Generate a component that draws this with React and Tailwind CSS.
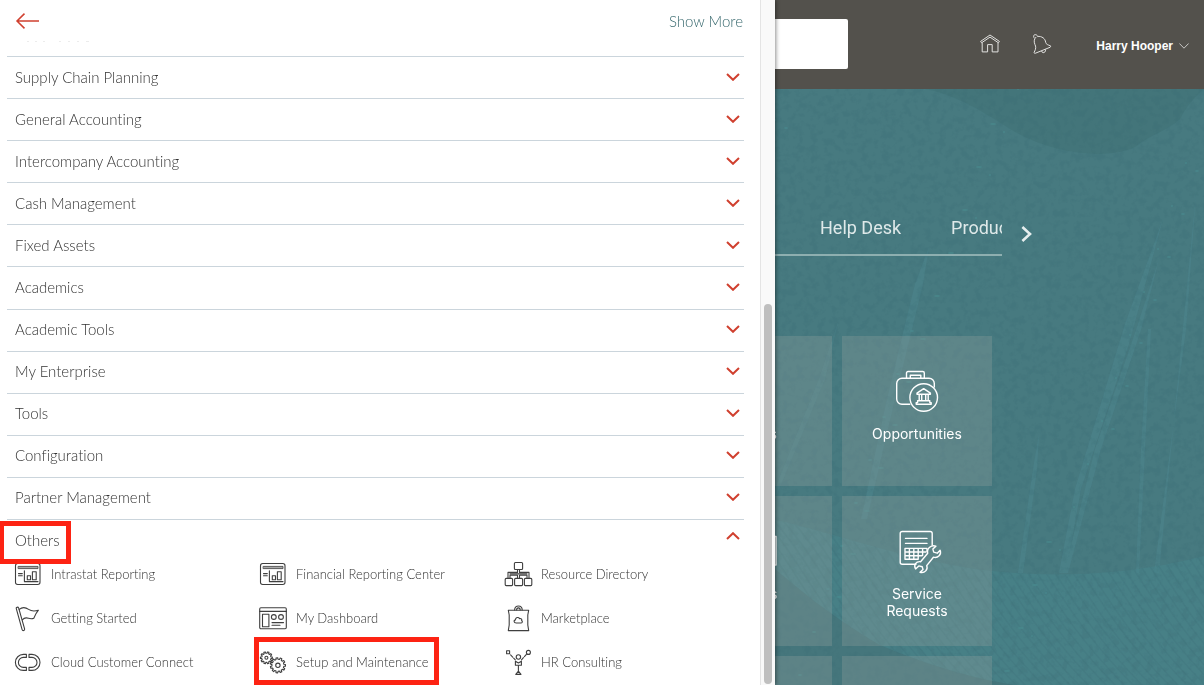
import React from "react";

const groups = [
  "Supply Chain Planning",
  "General Accounting",
  "Intercompany Accounting",
  "Cash Management",
  "Fixed Assets",
  "Academics",
  "Academic Tools",
  "My Enterprise",
  "Tools",
  "Configuration",
  "Partner Management",
];

function LineIcon({ children }) {
  return (
    <svg
      className="h-7 w-7 shrink-0 overflow-visible"
      viewBox="0 0 28 28"
      fill="none"
      stroke="#3f3f3f"
      strokeWidth="1.1"
      strokeLinecap="round"
      strokeLinejoin="round"
      aria-hidden="true"
    >
      {children}
    </svg>
  );
}

function ReportIcon() {
  return (
    <LineIcon>
      <rect x="1.5" y="3.5" width="24.5" height="21" rx="2.2" />
      <rect x="4.5" y="6.4" width="19.5" height="2.2" fill="#aaa" strokeWidth="0.8" />
      <path d="M4.5 13.6H8.3M4.5 15.8H8.3M10.4 10.8V21.6H24" />
      <rect x="13.3" y="15.7" width="3.2" height="4" />
      <rect x="18.4" y="11.7" width="3.8" height="8" />
    </LineIcon>
  );
}

function FlagIcon() {
  return (
    <LineIcon>
      <path d="M2.3 4.6C1.8 3 4.1 2.6 4.7 4.1L10.6 24.9C11 26.7 8.6 27.2 8.1 25.6Z" />
      <path d="M5.2 5.4C9 2.4 12 3.6 14.6 5.4C17.6 7.4 20.5 7.4 24.4 6.2C22.6 8.4 21 11.2 19.8 14.2C16.6 15.6 14.6 14 12.4 13.9C10.6 13.8 9.4 14.6 8.3 15.8" />
    </LineIcon>
  );
}

function ChainIcon() {
  return (
    <LineIcon>
      <path d="M12.4 6.4H9.4A8 8 0 0 0 9.4 22.4H12.4V19.4H9.4A5 5 0 0 1 9.4 9.4H12.4Z" />
      <path d="M15 6.4H18A8 8 0 0 1 18 22.4H15V19.4H18A5 5 0 0 0 18 9.4H15Z" />
    </LineIcon>
  );
}

function DashboardIcon() {
  return (
    <LineIcon>
      <rect x="0.7" y="3.8" width="26.6" height="21" rx="1.2" />
      <path d="M0.7 7.4H27.3M13 18.6H24.5M13 21.2H21" />
      <rect x="3.5" y="10.2" width="6.4" height="12.6" />
      <circle cx="14.8" cy="13" r="2.4" />
      <circle cx="22" cy="13" r="2.4" />
    </LineIcon>
  );
}

function gearPath(cx, cy, outer, inner, teeth) {
  const points = [];
  const step = (Math.PI * 2) / teeth;
  for (let i = 0; i < teeth; i += 1) {
    const a = i * step;
    [
      [inner, -0.3],
      [outer, -0.2],
      [outer, 0.2],
      [inner, 0.3],
    ].forEach(([r, f]) => {
      points.push(
        `${(cx + r * Math.cos(a + f * step)).toFixed(2)} ${(cy + r * Math.sin(a + f * step)).toFixed(2)}`
      );
    });
  }
  return `M${points.join("L")}Z`;
}

function GearsIcon() {
  return (
    <LineIcon>
      <path d={gearPath(7.4, 9.8, 6, 4.6, 10)} />
      <circle cx="7.4" cy="9.8" r="1.5" />
      <path d={gearPath(18.9, 17.3, 7.6, 6, 11)} fill="#fff" />
      <circle cx="18.9" cy="17.3" r="2.2" />
    </LineIcon>
  );
}

function OrgIcon() {
  return (
    <LineIcon>
      <rect x="10.4" y="2.5" width="8.2" height="7" rx="1" />
      <rect x="1.2" y="18.4" width="7.4" height="7.2" rx="1" />
      <rect x="10.6" y="18.4" width="8" height="7.2" rx="1" />
      <rect x="20.4" y="18.4" width="7.4" height="7.2" rx="1" />
      <path d="M13.5 9.5V12.4H4V18.2M15.5 9.5V12.4H25V18.2M13.5 18.2V15.3H6V18.2M15.5 18.2V15.3H23V18.2M6 13.9H23" />
    </LineIcon>
  );
}

function BagIcon() {
  return (
    <LineIcon>
      <path d="M4.3 6.2H24.7L23.8 11V21L24.7 26.6H4.3L5.2 21V11Z" />
      <path d="M10.6 6C10.6 0.6 18.2 0.6 18.2 6" />
      <path d="M12.6 6C12.6 3.2 16.2 3.2 16.2 6" />
      <path d="M12.2 19C9.8 19 9.3 16.4 11.4 15.9C11.4 13.4 14.4 12.6 15.6 14.6C17.4 14.2 18.2 15.6 17.6 16.6C19 17.4 18.3 19 16.8 19Z" />
    </LineIcon>
  );
}

function ConsultingIcon() {
  return (
    <LineIcon>
      <rect x="2.6" y="2.7" width="3" height="3" />
      <circle cx="24.4" cy="4.4" r="2" />
      <circle cx="14.4" cy="9" r="2.2" />
      <path d="M6.6 6.9L11.3 11.8M22.4 6.4L17.5 11.8" strokeDasharray="3 1.4" />
      <path d="M11.4 13.2L14.4 15L17.4 13.2V17.3H11.4ZM14.4 17.3V23.4M14.4 23.2L17 26.4H11.8Z" />
    </LineIcon>
  );
}

const links = [
  { label: "Intrastat Reporting", Icon: ReportIcon },
  { label: "Financial Reporting Center", Icon: ReportIcon },
  { label: "Resource Directory", Icon: OrgIcon },
  { label: "Getting Started", Icon: FlagIcon },
  { label: "My Dashboard", Icon: DashboardIcon },
  { label: "Marketplace", Icon: BagIcon },
  { label: "Cloud Customer Connect", Icon: ChainIcon },
  { label: "Setup and Maintenance", Icon: GearsIcon, marked: true },
  { label: "HR Consulting", Icon: ConsultingIcon },
];

function Chevron({ up }) {
  return (
    <svg
      className="h-2 w-[14px]"
      viewBox="0 0 14 8"
      fill="none"
      stroke="#d0402f"
      strokeWidth="2"
      aria-hidden="true"
    >
      <path d={up ? "M1 7L7 1.2L13 7" : "M1 1L7 6.8L13 1"} />
    </svg>
  );
}

function Drawer() {
  return (
    <aside className="relative z-10 flex w-[775px] shrink-0 bg-white font-[Lato,sans-serif] shadow-[1px_0_4px_rgba(0,0,0,0.45)] [font-variant-ligatures:none]">
      <div className="min-w-0 flex-1 pr-4 pl-[7px]">
        <div className="flex h-[41px] items-center justify-between pr-px pl-2">
          <button type="button" aria-label="Back">
            <svg
              className="h-4 w-6"
              viewBox="0 0 24 16"
              fill="none"
              stroke="#d0402f"
              strokeWidth="1.5"
              aria-hidden="true"
            >
              <path d="M24 8H2M9.5 0.6L2 8L9.5 15.4" />
            </svg>
          </button>
          <a href="#more" className="text-[15px] leading-5 font-light text-[#38696e]">
            Show More
          </a>
        </div>
        <svg className="h-[15px] w-24" viewBox="0 0 96 15" stroke="#ececec" aria-hidden="true">
          <path d="M20 0.5h2M28 0.5h2M36 0.5h2M52 0.5h2M61 0.5h2M70 0.5h2M79 0.5h3" />
        </svg>
        <nav>
          <div className="flex h-[463px] flex-col">
            {groups.map((name) => (
              <button
                key={name}
                type="button"
                aria-expanded="false"
                className="flex flex-1 items-center justify-between border-t border-[#cbd5dc] pr-1 pb-[2px] pl-2 text-[15px] leading-5 font-light text-[#333]"
              >
                {name}
                <Chevron />
              </button>
            ))}
          </div>
          <button
            type="button"
            aria-expanded="true"
            className="relative flex h-[33px] w-full items-center justify-between border-t border-[#cbd5dc] pr-1 pl-2 text-[15px] leading-5 font-light text-[#333]"
          >
            <span className="pt-2">Others</span>
            <Chevron up />
            <span className="pointer-events-none absolute top-px -left-2 z-10 h-[43px] w-[72px] border-[5px] border-[#fd2313]" />
          </button>
        </nav>
        <ul className="grid grid-cols-[245px_245px_1fr] pl-[7px]">
          {links.map(({ label, Icon, marked }) => (
            <li key={label} className="relative flex h-11 items-center">
              <a
                href="#open"
                className="flex items-center gap-[9px] text-[13px] leading-5 font-light text-[#333]"
              >
                <Icon />
                {label}
              </a>
              {marked && (
                <span className="pointer-events-none absolute -top-[3px] -left-[5px] h-12 w-[185px] border-[5px] border-[#fd2313]" />
              )}
            </li>
          ))}
        </ul>
      </div>
      <div className="flex w-[15px] flex-col justify-end border-l border-[#e4e4e4] bg-[#f9f9f9] pr-[3px] pb-px pl-[3px]">
        <div className="h-[380px] rounded-full bg-[#bfbfbf]" />
      </div>
    </aside>
  );
}

const stripes = Array.from({ length: 90 }, (_, i) => i * 9 - 300);
const flecks = Array.from({ length: 50 }, (_, i) => [(i * 137) % 425, (i * 211 + 31) % 590, 1 + (i % 3)]);

function Backdrop() {
  return (
    <svg
      className="absolute inset-0 h-full w-full"
      viewBox="0 0 429 596"
      preserveAspectRatio="xMidYMid slice"
      aria-hidden="true"
    >
      <defs>
        <filter id="mottle" x="0" y="0" width="100%" height="100%" colorInterpolationFilters="sRGB">
          <feTurbulence type="fractalNoise" baseFrequency="0.14" numOctaves="3" seed="8" />
          <feColorMatrix values="0 0 0 0 0.23  0 0 0 0 0.42  0 0 0 0 0.45  5 0 0 0 -2.4" />
        </filter>
        <clipPath id="hill">
          <path d="M0 431C50 441 120 468 200 480C260 488 340 490 429 467V596H0Z" />
        </clipPath>
      </defs>
      <rect width="429" height="596" fill="#477a80" />
      <path
        d="M150 0C175 4 205 20 235 40C275 64 330 72 360 58C375 46 392 42 405 30C412 16 420 8 429 0Z"
        fill="#427378"
        opacity="0.7"
      />
      <g fill="#4d848d" opacity="0.6">
        <path d="M154 158L148 195L120 310L92 430H86L112 310L140 195Z" />
        <path d="M421 105L384 484H379L411 240Z" />
        <path d="M388 130L350 235L300 400L284 484H291L306 400L354 255Z" />
        <path d="M384 170L361 241L320 360L289 484H293L326 360L366 241Z" />
        <path d="M376 240L370 360L364 484H361L366 360L373 240Z" />
        <path d="M264 345L262 380L248 484H243L258 380Z" />
        <path d="M64 230L50 290L0 410V400L44 290Z" opacity="0.7" />
      </g>
      <g clipPath="url(#hill)">
        <rect width="429" height="596" fill="#47848a" opacity="0.6" />
        <g fill="none" stroke="#3f7078" strokeWidth="1.5" opacity="0.25">
          {stripes.map((x) => (
            <path key={x} d={`M${x} 420C${x + 50} 470 ${x + 60} 520 ${x + 140} 600`} />
          ))}
        </g>
        <path d="M0 480C30 505 60 530 105 556C150 575 200 590 240 596H0Z" fill="#45767c" />
      </g>
      <rect width="429" height="596" filter="url(#mottle)" opacity="0.2" />
      <g fill="#4b9093" opacity="0.5">
        {flecks.map(([x, y, r]) => (
          <ellipse key={`${x}-${y}`} cx={x} cy={y} rx={r} ry="1" />
        ))}
      </g>
    </svg>
  );
}

function TileIcon({ children }) {
  return (
    <svg
      className="h-11 w-11 overflow-visible"
      viewBox="0 0 44 44"
      fill="none"
      stroke="#fff"
      strokeWidth="1.4"
      strokeLinejoin="round"
      strokeLinecap="round"
      aria-hidden="true"
    >
      {children}
    </svg>
  );
}

function BriefcaseIcon() {
  return (
    <TileIcon>
      <path d="M14.8 34.3H7A5.3 5.3 0 0 1 1.7 29V13.6A5.3 5.3 0 0 1 7 8.3H34A5.3 5.3 0 0 1 39.3 13.6V17" />
      <path d="M11.5 8.3V3A1.5 1.5 0 0 1 13 1.5H27.8A1.5 1.5 0 0 1 29.3 3V8.3M15.3 8.3V5.2H25.8V8.3" />
      <circle cx="28.7" cy="27.5" r="13.8" />
      <path d="M22 23.2L28.7 18.6L35.4 23.2V24.2H22ZM24.2 24.4V30.6M26.7 24.4V30.6M30.7 24.4V30.6M33.2 24.4V30.6M22.6 30.8H34.8V32.6H36.2V34.3H21.2V32.6H22.6Z" />
    </TileIcon>
  );
}

function RequestIcon() {
  return (
    <TileIcon>
      <path d="M21 34.3H7.2A2 2 0 0 1 5.2 32.3V3.5A2 2 0 0 1 7.2 1.5H35.2A2 2 0 0 1 37.2 3.5V15" />
      <path d="M10.5 8.4H32M10.5 13.4H32M23 29.3H10V18.4H32V21M10 22H31M10 25.7H27M14.4 18.4V29.3M18.8 18.4V29.3M23.2 18.4V29.3M27.6 18.4V25.6" />
      <path d="M40.9 16.2C36.3 14.6 31.6 18.2 32.7 23.2L25.6 31.7C21 31.2 18.3 34.8 20.6 39L23.8 35.9L27.2 36.8L28 39.4L25 42.3C29.8 43.6 33.3 39.4 31.7 35.6L38.4 27.2C43 28.5 46.8 24.6 45.1 20.2L42.2 23.2L38.7 22.2L37.9 19.1Z" />
    </TileIcon>
  );
}

function CardIcon() {
  return (
    <TileIcon>
      <rect x="3" y="6.5" width="38" height="28.5" />
      <path d="M9 14H35M9 20H35M9 26H26" />
    </TileIcon>
  );
}

function PersonIcon() {
  return (
    <TileIcon>
      <circle cx="22" cy="14" r="7" />
      <path d="M10 38C10 22 34 22 34 38Z" />
    </TileIcon>
  );
}

function Tile({ label, Icon }) {
  return (
    <a
      href="#tile"
      className="flex h-[150px] w-[150px] flex-col items-center gap-[11px] bg-[#95a3a0]/30 px-8 pt-[34px] text-center font-[Inter,sans-serif] text-[14px] leading-[17px] text-white"
    >
      {Icon && <Icon />}
      {label}
    </a>
  );
}

function Home() {
  return (
    <div className="flex min-w-0 flex-1 flex-col">
      <header className="flex h-[89px] items-center justify-between bg-[#53514c] pr-[15px] pb-px">
        <input
          type="search"
          aria-label="Search"
          className="h-[50px] w-[73px] rounded-r-xs bg-white outline-none"
        />
        <div className="flex items-center text-[#e2e2e0]">
          <button type="button" aria-label="Home" className="mr-8">
            <svg className="h-5 w-5" viewBox="0 0 20 20" fill="none" stroke="currentColor" strokeWidth="1" strokeLinejoin="round" aria-hidden="true">
              <path d="M0.6 7.4L10 1L19.4 7.4L18.4 8.8L10 3.1L1.6 8.8ZM2.2 8.6V17.9H7.6V10.6H12.2V17.9H18V8.6" />
            </svg>
          </button>
          <button type="button" aria-label="Notifications" className="mr-11">
            <svg className="h-5 w-5" viewBox="0 0 20 20" fill="none" stroke="currentColor" strokeWidth="1" strokeLinejoin="round" aria-hidden="true">
              <path d="M5.4 2.4C10 2 13.2 4.5 13.7 8.4C14 10.3 16 10.9 18.6 11.9C18.8 12.6 18.6 13 18 13.3L3.2 19.3C2.4 19.5 2 19 2.2 18.2C4.2 14.6 4 12.6 2.9 10.4C1.6 7.4 2.2 4.6 4.2 3" />
              <path d="M5.4 2.4C5.4 0.2 1.6 0 1.6 2.2C1.6 3.2 2 3.8 2.6 4.3M9.6 17C10.2 19.8 13.8 19 13.6 15.4" />
            </svg>
          </button>
          <button
            type="button"
            className="flex items-center gap-[6px] pt-1 font-['Liberation_Sans',sans-serif] text-[12px] leading-5 font-bold text-white"
          >
            Harry Hooper
            <svg className="h-[6px] w-[10px]" viewBox="0 0 10 6" fill="none" stroke="#c9c8c6" aria-hidden="true">
              <path d="M0.4 0.5L5 5.2L9.6 0.5" />
            </svg>
          </button>
        </div>
      </header>
      <main className="relative flex-1 overflow-hidden">
        <Backdrop />
        <div className="relative pt-[127px]">
          <div className="flex items-center">
            <nav className="flex w-[227px] gap-[50px] overflow-hidden border-b-2 border-[#8eafb0] pb-[14px] pl-[45px] text-[18px] leading-6 whitespace-nowrap text-[#dfe9e9]">
              <a href="#help-desk">Help Desk</a>
              <a href="#product">Product</a>
            </nav>
            <button type="button" aria-label="Next" className="mb-1 ml-[19px]">
              <svg className="h-4 w-3" viewBox="0 0 12 16" fill="none" stroke="#e6eeee" strokeWidth="2.6" aria-hidden="true">
                <path d="M1.4 1L9 8L1.4 15" />
              </svg>
            </button>
          </div>
          <div className="mt-20 flex w-[217px] justify-end overflow-hidden">
            <div className="grid shrink-0 grid-cols-[150px_150px] gap-[10px]">
              <Tile label="Leads" Icon={PersonIcon} />
              <Tile label="Opportunities" Icon={BriefcaseIcon} />
              <Tile label="Cases" Icon={CardIcon} />
              <Tile label="Service Requests" Icon={RequestIcon} />
              <Tile />
              <Tile />
            </div>
          </div>
        </div>
      </main>
    </div>
  );
}

export default function App() {
  return (
    <div className="flex h-screen overflow-hidden bg-white font-[Roboto,sans-serif]">
      <Drawer />
      <Home />
    </div>
  );
}
